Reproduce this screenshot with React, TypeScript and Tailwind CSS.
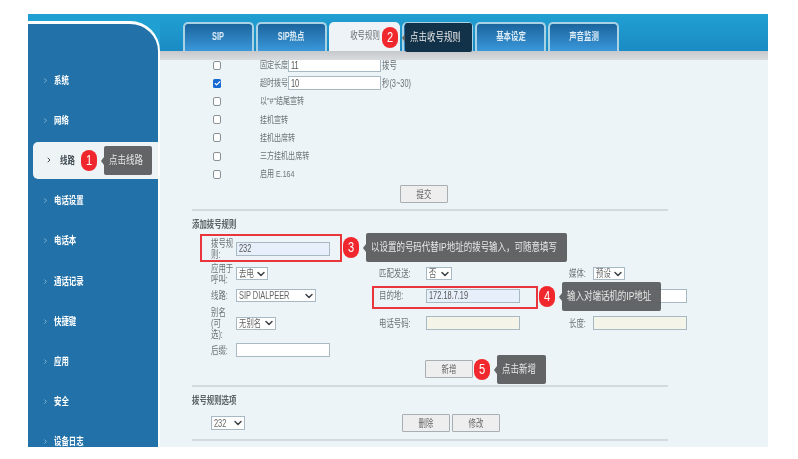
import type { ReactNode } from "react";
import { Check, ChevronDown, ChevronRight } from "lucide-react";

const NAV_ITEMS = ["系统", "网络", "线路", "电话设置", "电话本", "通话记录", "快捷键", "应用", "安全", "设备日志"];
const TABS = ["SIP", "SIP热点", "收号规则", "", "基本设定", "声音监测"];

// the source picture is squeezed sideways, so every text run is narrowed the same way
function Txt({ children, center = false, className = "" }: { children: ReactNode; center?: boolean; className?: string }) {
  return (
    <span className={`inline-block scale-x-[.74] ${center ? "origin-center" : "origin-left"} ${className}`}>
      {children}
    </span>
  );
}

function NavItem({ label, active }: { label: string; active: boolean }) {
  if (active) {
    return (
      <div className="flex h-[40.2px] items-center pl-[5px]">
        <div className="flex h-[37px] flex-1 items-center rounded-l-[5px] bg-[#eef3f6] pl-[12px] text-[#3f4a52]">
          <ChevronRight size={8} strokeWidth={3} />
          <Txt className="ml-[7px] whitespace-nowrap text-[10px] font-bold">{label}</Txt>
        </div>
      </div>
    );
  }
  return (
    <div className="flex h-[40.2px] items-center pl-[14px] text-white">
      <ChevronRight size={7} strokeWidth={2} className="text-[#c5dcec]" />
      <Txt className="ml-[5px] whitespace-nowrap text-[10px] font-bold">{label}</Txt>
    </div>
  );
}

function Tab({ label }: { label: string }) {
  if (label === "收号规则") {
    return (
      <div className="h-[29px] w-[71px] rounded-t-[5px] bg-[#edf3f6] text-center text-[10px] leading-[28px] text-[#6a6f73]">
        <Txt center>{label}</Txt>
      </div>
    );
  }
  return (
    <div className="h-[29px] w-[71px] rounded-t-[5px] border-x-2 border-t-2 border-[#a9d3e4] bg-gradient-to-b from-[#1c659e] to-[#3a98da] text-center text-[10px] font-bold leading-[25px] text-[#dcebf5]">
      <Txt center>{label}</Txt>
    </div>
  );
}

function Box({ checked = false }: { checked?: boolean }) {
  return checked ? (
    <div className="flex h-[9px] w-[8px] items-center justify-center rounded-[1.5px] bg-[#1769d2] text-white">
      <Check size={7} strokeWidth={4} />
    </div>
  ) : (
    <div className="h-[9px] w-[8px] rounded-[2px] border border-[#8b9296] bg-white" />
  );
}

function OptionRow({ label, checked, children }: { label: string; checked?: boolean; children?: ReactNode }) {
  return (
    <div className="flex h-[18.2px] items-center pl-[21px]">
      <Box checked={checked} />
      <div className="ml-[39px] w-[28px] whitespace-nowrap text-[9.5px] text-[#6d7275]">
        <Txt>{label}</Txt>
      </div>
      {children}
    </div>
  );
}

function TextBox({ value = "", className = "" }: { value?: string; className?: string }) {
  return (
    <div className={`flex h-[14px] items-center border border-[#a9b9c4] pl-[2px] text-[10px] text-[#555] ${className}`}>
      <Txt>{value}</Txt>
    </div>
  );
}

function SelectBox({ value, className = "" }: { value: string; className?: string }) {
  return (
    <div className={`flex h-[13px] items-center justify-between border border-[#a9b9c4] bg-white pl-[2px] text-[10px] text-[#666] ${className}`}>
      <Txt className="whitespace-nowrap">{value}</Txt>
      <ChevronDown size={12} strokeWidth={3} className="-ml-[6px] shrink-0 text-[#3d4348]" />
    </div>
  );
}

function Btn({ label, className = "" }: { label: string; className?: string }) {
  return (
    <div className={`flex h-[18px] w-[48px] items-center justify-center rounded-[1px] border border-[#a8aeb2] bg-[#eeeeee] text-[10px] text-[#666] ${className}`}>
      <Txt center>{label}</Txt>
    </div>
  );
}

function Label({ children }: { children: ReactNode }) {
  return (
    <div className="whitespace-nowrap text-[10px] leading-[11px] text-[#6d7275]">
      <Txt>{children}</Txt>
    </div>
  );
}

function Callout({ n, text, className, tipClass, bubbleClass = "bg-[#626466]" }: {
  n: number;
  text: string;
  className: string;
  tipClass: string;
  bubbleClass?: string;
}) {
  return (
    <div className={`absolute z-20 flex items-center ${className}`}>
      <div className="flex h-[21px] w-[16px] shrink-0 items-center justify-center rounded-full bg-[#f0282d] text-[15px] text-white">
        <Txt center>{n}</Txt>
      </div>
      <div className={`relative ml-[7px] flex h-[29px] items-center whitespace-nowrap rounded-[2px] pl-[5px] text-[11px] text-[#e8e8e8] ${bubbleClass} ${tipClass}`}>
        <div className="absolute -left-[3px] top-[11px] h-0 w-0 border-y-[4px] border-r-[3px] border-y-transparent border-r-[#626466]" />
        <span className="inline-block origin-left scale-x-[.77]">{text}</span>
      </div>
    </div>
  );
}

export default function App() {
  return (
    <div className="relative h-[459px] w-[798px] overflow-hidden bg-white blur-[0.4px] font-['Liberation_Sans','Noto_Sans_CJK_SC',sans-serif]">
      <div className="pl-[28px] pt-[14px]">
        <div className="flex h-[433px] w-[740px] overflow-hidden bg-[#edf4f7]">
          {/* left nav */}
          <div className="w-[132px] shrink-0 bg-[#20a0d2] pt-[7px]">
            <div className="h-[426px] overflow-hidden rounded-tr-[30px] border-r-2 border-t-[3px] border-white bg-[#2272a9] pt-[36px]">
              {NAV_ITEMS.map((item) => (
                <NavItem key={item} label={item} active={item === "线路"} />
              ))}
            </div>
          </div>

          <div className="flex-1">
            <div className="flex h-[37px] gap-[2px] bg-gradient-to-b from-[#21a0d2] to-[#1a8bc4] pl-[23px] pt-[8px]">
              {TABS.map((tab, i) => (
                <Tab key={i} label={tab} />
              ))}
            </div>
            <div className="relative z-10 h-[9px] bg-gradient-to-b from-[#c6c8cb] to-[#d9dcde]" />

            {/* page body */}
            <div className="-mt-[4px] w-[508px] pl-[32px]">
              <OptionRow label="固定长度">
                <TextBox value="11" className="h-[12px] w-[93px] bg-white" />
                <span className="ml-[1px] text-[10px] text-[#6d7275]"><Txt>拨号</Txt></span>
              </OptionRow>
              <OptionRow label="超时拨号" checked>
                <TextBox value="10" className="h-[12px] w-[93px] bg-white" />
                <span className="ml-[1px] whitespace-nowrap text-[10px] text-[#6d7275]"><Txt>秒(3~30)</Txt></span>
              </OptionRow>
              <OptionRow label={'以"#"结尾宣转'} />
              <OptionRow label="挂机宣转" />
              <OptionRow label="挂机出席转" />
              <OptionRow label="三方挂机出席转" />
              <OptionRow label="启用 E.164" />

              <Btn label="提交" className="ml-[208px] mt-[2px]" />
              <div className="mt-[6px] h-[2px] bg-[#d3d9dc]" />
              <div className="mt-[8px] h-[16px] text-[10px] font-bold leading-[12px] text-[#5d6367]"><Txt>添加拨号规则</Txt></div>

              <div className="ml-[19px] grid w-[476px] grid-cols-[25px_143px_47px_143px_24px_94px] grid-rows-[27px_23px_21px_34px_20px] items-center">
                <Label>拨号规<br />则:</Label>
                <TextBox value="232" className="w-[94px] bg-[#e6effa]" />
                <div className="col-span-4" />

                <Label>应用于<br />呼叫:</Label>
                <SelectBox value="去电" className="w-[32px]" />
                <Label>匹配发送:</Label>
                <SelectBox value="否" className="w-[26px]" />
                <Label>媒体:</Label>
                <SelectBox value="预设" className="w-[32px]" />

                <Label>线路:</Label>
                <SelectBox value="SIP DIALPEER" className="w-[80px]" />
                <Label>目的地:</Label>
                <TextBox value="172.18.7.19" className="w-[94px] bg-[#e6effa]" />
                <div />
                <TextBox className="w-[94px] bg-white" />

                <Label>别名<br />(可<br />选):</Label>
                <SelectBox value="无别名" className="w-[40px]" />
                <Label>电话号码:</Label>
                <TextBox className="w-[94px] bg-[#f5f4e9]" />
                <Label>长度:</Label>
                <TextBox className="w-[94px] bg-[#f5f4e9]" />

                <Label>后缀:</Label>
                <TextBox className="w-[94px] bg-white" />
              </div>

              <Btn label="新增" className="ml-[233px]" />
              <div className="mt-[7px] h-[2px] bg-[#d3d9dc]" />
              <div className="mt-[8px] h-[19px] text-[10px] font-bold leading-[12px] text-[#5d6367]"><Txt>拨号规则选项</Txt></div>
              <div className="flex items-center pl-[19px]">
                <SelectBox value="232" className="h-[14px] w-[34px]" />
                <Btn label="删除" className="ml-[157px]" />
                <Btn label="修改" className="ml-[2px]" />
              </div>
              <div className="mt-[7px] h-[2px] bg-[#d3d9dc]" />
            </div>
          </div>
        </div>
      </div>

      {/* red highlight frames */}
      <div className="absolute left-[200px] top-[234px] z-10 h-[28px] w-[142px] border-2 border-[#e9363c]" />
      <div className="absolute left-[372px] top-[286px] z-10 h-[23px] w-[166px] border-2 border-[#e9363c]" />

      <Callout n={1} text="点击线路" className="left-[81px] top-[146px]" tipClass="w-[48px]" />
      <Callout n={2} text="点击收号规则" className="left-[382px] top-[23px]" tipClass="w-[67px]" bubbleClass="bg-[#123249]" />
      <Callout n={3} text="以设置的号码代替IP地址的拨号输入，可随意填写" className="left-[343px] top-[233px]" tipClass="w-[201px]" />
      <Callout n={4} text="输入对端话机的IP地址" className="left-[539px] top-[282px]" tipClass="w-[99px]" bubbleClass="bg-[#5c5e60]/95" />
      <Callout n={5} text="点击新增" className="left-[474px] top-[355px]" tipClass="w-[49px]" />
    </div>
  );
}
